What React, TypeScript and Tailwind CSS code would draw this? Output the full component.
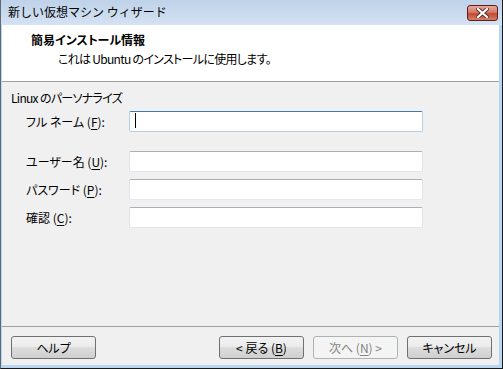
import React from 'react'

const font = "font-['Noto_Sans_CJK_JP','Noto_Sans',sans-serif]"

function Mn({ c }: { c: string }) {
  return <span className="underline underline-offset-2">{c}</span>
}

function Field({ label, focused }: { label: React.ReactNode; focused?: boolean }) {
  return (
    <div className="flex items-center h-[21px]">
      <div className="w-[103px] leading-[16px] text-black">{label}</div>
      <div
        className={
          'relative w-[294px] h-[21px] bg-white rounded-[2px] border ' +
          (focused
            ? 'border-[#b5cfe7] border-t-[#3d7bad]'
            : 'border-[#e2e3ea] border-t-[#abadb3] border-b-[#e3e9ef]')
        }
      >
        {focused && <div className="absolute left-[5px] top-[1px] w-px h-[15px] bg-black" />}
      </div>
    </div>
  )
}

function Btn({ children, disabled }: { children: React.ReactNode; disabled?: boolean }) {
  return (
    <div
      className={
        'w-[85px] h-[23px] rounded-[3px] border flex items-center justify-center leading-[16px] ' +
        (disabled
          ? 'border-[#adb2b5] bg-[#f4f4f4] text-[#838383]'
          : 'border-[#707070] text-black bg-[linear-gradient(#f2f2f2_0%,#ebebeb_50%,#dddddd_50%,#cfcfcf_100%)]')
      }
    >
      {children}
    </div>
  )
}

export default function App() {
  return (
    <div
      className={`w-[503px] h-[369px] flex flex-col bg-[#b9d5f0] border-l border-r border-b border-l-[#5f6a78] border-r-[#1a1a1a] border-b-[#1a1a1a] text-[12px] ${font}`}
    >
      {/* title bar */}
      <div className="h-[25px] flex items-start justify-between pl-[7px] pr-[4px] bg-[linear-gradient(#bfd2e9,#d4e2f2)]">
        <div className="pt-[4px] leading-[16px] text-black">新しい仮想マシン ウィザード</div>
        <div className="mt-[5px] w-[31px] h-[16px] rounded-[3px] border border-[#5a1f1f] bg-[linear-gradient(#e9a99b_0%,#d47866_45%,#c24a35_55%,#d77f66_100%)] flex items-center justify-center">
          <svg width="13" height="10" viewBox="0 0 13 10">
            <path d="M2 1 L11 9 M11 1 L2 9" stroke="#5a2a22" strokeWidth="4" strokeLinecap="square" />
            <path d="M2 1 L11 9 M11 1 L2 9" stroke="#ffffff" strokeWidth="2.2" strokeLinecap="square" />
          </svg>
        </div>
      </div>

      <div className="flex-1 ml-px mr-[3px] mb-[3px] flex flex-col bg-[#f0f0f0] [font-feature-settings:'palt']">
        {/* header */}
        <div className="h-[57px] bg-white border-b border-[#a0a0a0] pl-[29px] pt-[7px]">
          <div className="font-bold leading-[16px] text-black">簡易インストール情報</div>
          <div className="mt-[3px] pl-[27px] leading-[16px] text-black tracking-[-0.7px]">
            これは Ubuntu のインストールに使用します。
          </div>
        </div>

        {/* body */}
        <div className="flex-1 pt-[8px] pl-[9px]">
          <div className="leading-[16px] text-black tracking-[-0.7px]">Linux のパーソナライズ</div>
          <div className="mt-[5px] pl-[15px] flex flex-col">
            <Field focused label={<>フル ネーム (<Mn c="F" />):</>} />
            <div className="mt-[19px] flex flex-col gap-[7px]">
              <Field label={<>ユーザー名 (<Mn c="U" />):</>} />
              <Field label={<>パスワード (<Mn c="P" />):</>} />
              <Field label={<>確認 (<Mn c="C" />):</>} />
            </div>
          </div>
        </div>

        {/* footer */}
        <div className="h-[39px] border-t border-[#a0a0a0] flex items-start pt-[9px] pl-[9px] pr-[7px]">
          <Btn>ヘルプ</Btn>
          <div className="flex-1" />
          <div className="flex gap-[9px]">
            <Btn>&lt; 戻る (<Mn c="B" />)</Btn>
            <Btn disabled>次へ (<Mn c="N" />) &gt;</Btn>
            <Btn>キャンセル</Btn>
          </div>
        </div>
      </div>
    </div>
  )
}
